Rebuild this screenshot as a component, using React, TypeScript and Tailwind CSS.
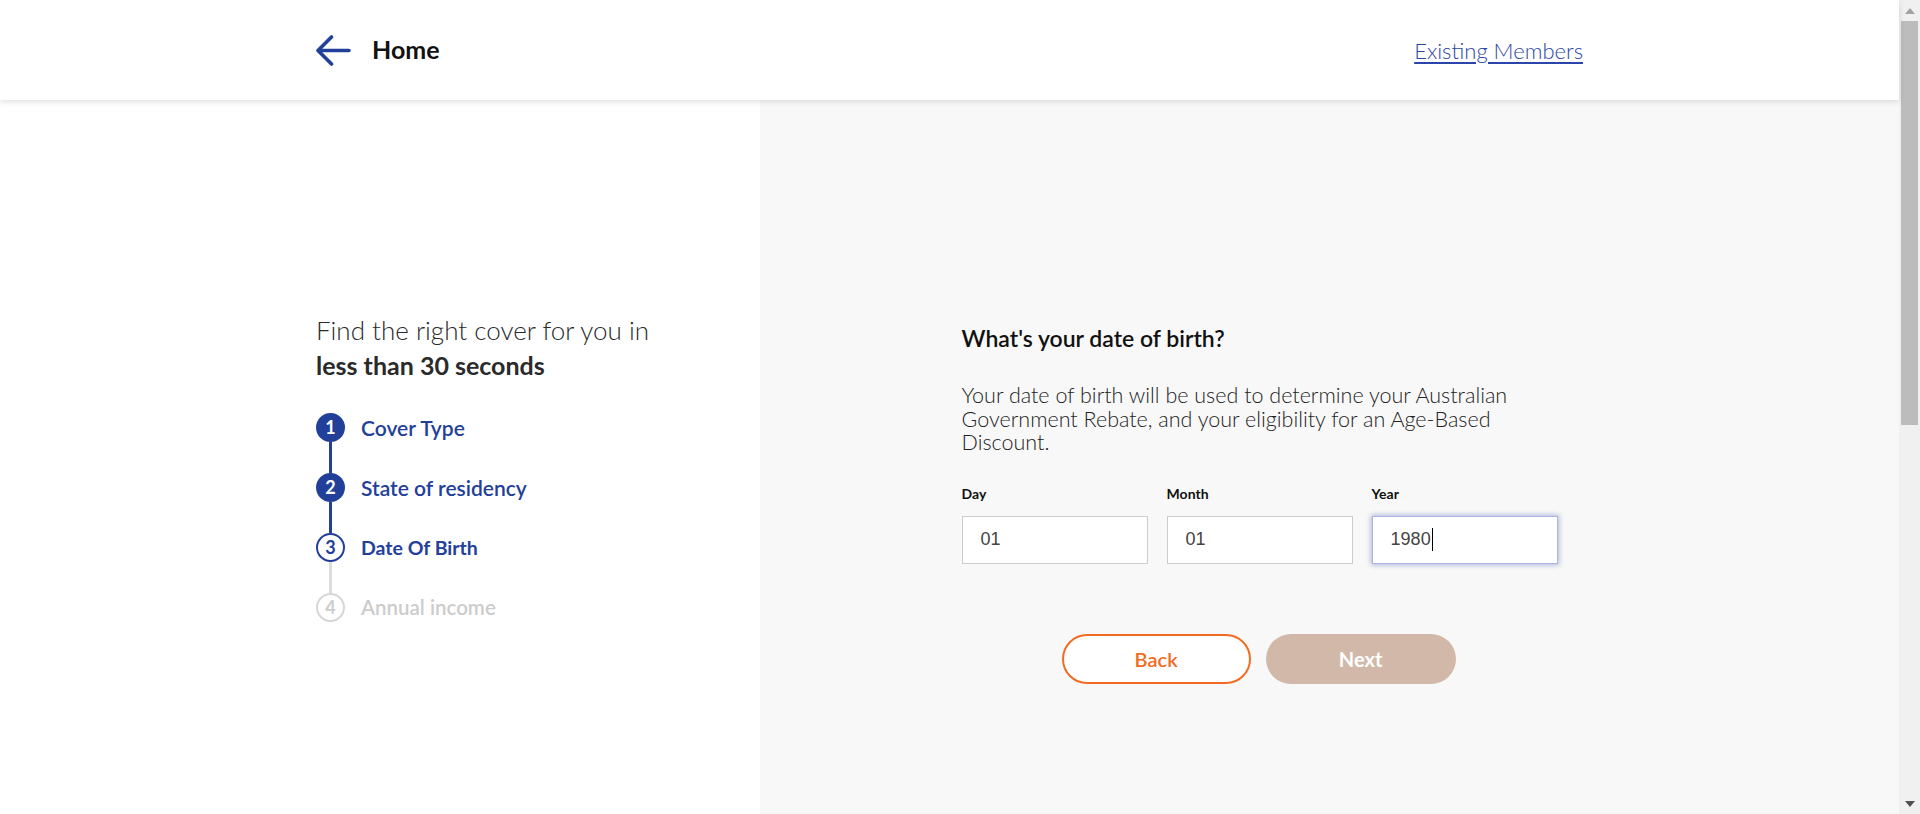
import React from 'react'

const steps = [
  { n: 1, label: 'Cover Type', state: 'done' },
  { n: 2, label: 'State of residency', state: 'done' },
  { n: 3, label: 'Date Of Birth', state: 'current' },
  { n: 4, label: 'Annual income', state: 'todo' },
]

function Step({ step, last, lineBlue }: { step: any; last: boolean; lineBlue: boolean }) {
  const circle =
    step.state === 'done'
      ? 'bg-[#22409a] text-white border-[#22409a]'
      : step.state === 'current'
        ? 'bg-white text-[#22409a] border-[#22409a]'
        : 'bg-white text-[#cccccc] border-[#d6d6d6]'
  const text =
    step.state === 'todo'
      ? 'text-[#cccccc] font-semibold text-[20.5px]'
      : step.state === 'current'
        ? 'text-[#22409a] font-bold text-[19.5px]'
        : 'text-[#22409a] font-semibold text-[21px]'
  return (
    <div className="flex">
      <div className="flex flex-col items-center w-[29px]">
        <div
          className={`w-[29px] h-[29px] rounded-full border-2 flex items-center justify-center text-[18px] font-bold ${circle}`}
        >
          {step.n}
        </div>
        {!last && (
          <div className={`w-[3px] h-[31px] ${lineBlue ? 'bg-[#22409a]' : 'bg-[#dddddd]'}`} />
        )}
      </div>
      <div className={`ml-[16px] h-[29px] flex items-center ${text}`}>{step.label}</div>
    </div>
  )
}

function Field({ label, value, focused }: { label: string; value: string; focused?: boolean }) {
  return (
    <div className="flex flex-col w-[186px]">
      <label className="text-[14px] leading-[20px] font-bold text-[#111111]">{label}</label>
      <div
        className={`mt-[12px] h-[48px] bg-white flex items-center pl-[18px] border ${
          focused
            ? 'border-[#a9b4e0] shadow-[0_0_5px_1px_rgba(60,80,170,0.4)]'
            : 'border-[#cccccc]'
        }`}
      >
        <span className="text-[18px] text-[#444444] font-['Liberation_Sans',sans-serif]">
          {value}
        </span>
        {focused && <span className="ml-px w-px h-[23px] bg-black" />}
      </div>
    </div>
  )
}

export default function App() {
  return (
    <div className="flex h-[814px] overflow-hidden font-['Lato',sans-serif] text-[#333333]">
      <div className="flex-1 flex flex-col bg-[#f8f8f8]">
        {/* Header */}
        <header className="relative z-10 h-[100px] shrink-0 bg-white shadow-[0_2px_6px_rgba(0,0,0,0.12)]">
          <div className="mx-auto w-[1267px] h-full flex items-center justify-between">
            <div className="flex items-center">
              <svg width="35" height="31" viewBox="0 0 35 31" fill="none">
                <path
                  d="M33 15.5H3M15.5 2L2 15.5L15.5 29"
                  stroke="#22409a"
                  strokeWidth="3.6"
                  strokeLinecap="round"
                  strokeLinejoin="round"
                />
              </svg>
              <span className="ml-[21px] text-[25px] font-bold text-[#111111]">Home</span>
            </div>
            <a className="text-[22px] font-light text-[#2b46a8] underline underline-offset-[3px]">
              Existing Members
            </a>
          </div>
        </header>

        <main className="flex flex-1">
          {/* Left */}
          <section className="w-[40%] bg-white pl-[316px] pt-[213px]">
            <p className="text-[26px] leading-[35px] font-light text-[#2a2a2a]">
              Find the right cover for you in
              <br />
              <span className="font-bold text-[25px]">less than 30 seconds</span>
            </p>
            <div className="mt-[30px]">
              {steps.map((s, i) => (
                <Step key={s.n} step={s} last={i === steps.length - 1} lineBlue={i < 2} />
              ))}
            </div>
          </section>

          {/* Right */}
          <section className="w-[60%] pl-[202px] pt-[223px]">
            <h2 className="text-[23px] leading-[30px] font-semibold text-[#111111]">
              What's your date of birth?
            </h2>
            <p className="mt-[31px] text-[21.5px] leading-[23.5px] font-light text-[#222222]">
              Your date of birth will be used to determine your Australian
              <br />
              Government Rebate, and your eligibility for an Age-Based
              <br />
              Discount.
            </p>
            <div className="mt-[29px] flex gap-[19px]">
              <Field label="Day" value="01" />
              <Field label="Month" value="01" />
              <Field label="Year" value="1980" focused />
            </div>
            <div className="mt-[70px] ml-[100px] flex gap-[15px]">
              <button className="w-[189px] h-[50px] rounded-full border-2 border-[#f26b21] bg-white text-[#f26b21] text-[20px] font-semibold">
                Back
              </button>
              <button className="w-[190px] h-[50px] rounded-full bg-[#d2b8a9] text-white text-[20px] font-bold">
                Next
              </button>
            </div>
          </section>
        </main>
      </div>

      {/* Scrollbar */}
      <div className="w-[21px] shrink-0 bg-[#f0f0f0] flex flex-col items-center">
        <div className="h-[21px] flex items-center justify-center">
          <svg width="10" height="6" viewBox="0 0 10 6">
            <path d="M5 0L10 6H0Z" fill="#a3a3a3" />
          </svg>
        </div>
        <div className="w-[17px] h-[404px] bg-[#bcbcbc]" />
        <div className="flex-1" />
        <div className="h-[21px] flex items-center justify-center">
          <svg width="10" height="6" viewBox="0 0 10 6">
            <path d="M0 0H10L5 6Z" fill="#505050" />
          </svg>
        </div>
      </div>
    </div>
  )
}
